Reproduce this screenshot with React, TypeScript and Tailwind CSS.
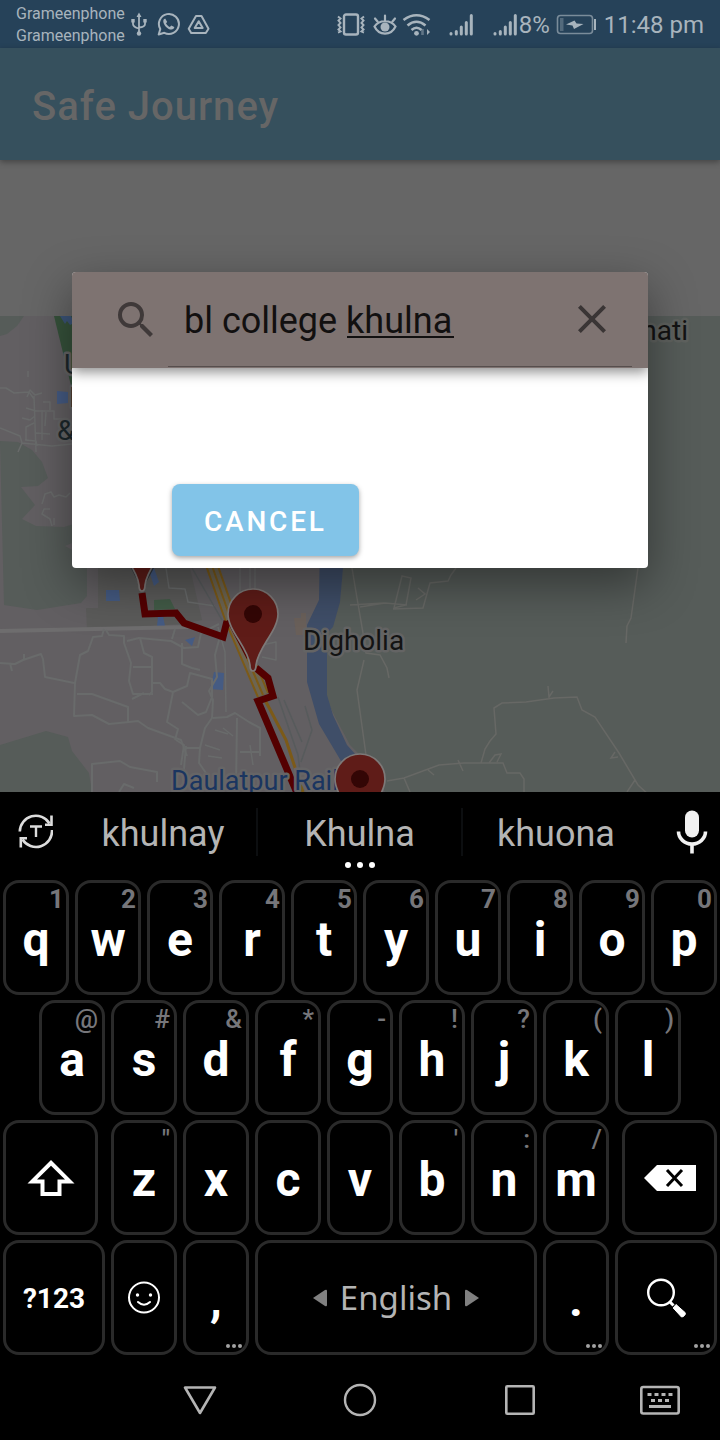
import React, { useState } from "react";

type KeyDef = { label: string; hint?: string };

const ROW_1: KeyDef[] = [
  { label: "q", hint: "1" },
  { label: "w", hint: "2" },
  { label: "e", hint: "3" },
  { label: "r", hint: "4" },
  { label: "t", hint: "5" },
  { label: "y", hint: "6" },
  { label: "u", hint: "7" },
  { label: "i", hint: "8" },
  { label: "o", hint: "9" },
  { label: "p", hint: "0" },
];

const ROW_2: KeyDef[] = [
  { label: "a", hint: "@" },
  { label: "s", hint: "#" },
  { label: "d", hint: "&" },
  { label: "f", hint: "*" },
  { label: "g", hint: "-" },
  { label: "h", hint: "!" },
  { label: "j", hint: "?" },
  { label: "k", hint: "(" },
  { label: "l", hint: ")" },
];

const ROW_3: KeyDef[] = [
  { label: "z", hint: '"' },
  { label: "x" },
  { label: "c" },
  { label: "v" },
  { label: "b", hint: "'" },
  { label: "n", hint: ":" },
  { label: "m", hint: "/" },
];

function SignalIcon() {
  return (
    <svg className="h-6 w-6" viewBox="0 0 24 24" stroke="currentColor" strokeWidth="3" strokeLinecap="round" aria-hidden="true">
      <path d="M2 20.500v.5M7.300 18.500v2.500M12.300 14v7M17.300 9.500V21M22.300 2.500V21" />
    </svg>
  );
}

function StatusBar() {
  return (
    <header className="flex h-12 items-center justify-between bg-[#264259] px-4 text-[#a8b4bd]">
      <div className="flex items-center">
        <div className="pt-[2px] text-base leading-[22px]">
          <div>Grameenphone</div>
          <div>Grameenphone</div>
        </div>
        <svg className="ml-1 h-6 w-5" viewBox="0 0 20 24" fill="none" stroke="currentColor" strokeWidth="1.800" aria-hidden="true">
          <path d="M10 3v18M4 9.500v2.500q0 3 6 4.500M16 9.500v2.500q0 3-6 3.500" />
          <path d="M10 .5 7.500 5h5zM2.300 7h3.400v3.400H2.300zM14.300 7h3.400v3.400h-3.400z" fill="currentColor" stroke="none" />
          <circle cx="10" cy="21.500" r="2.200" fill="currentColor" stroke="none" />
        </svg>
        <svg className="ml-2 h-6 w-6" viewBox="0 0 24 24" aria-hidden="true">
          <path d="M1.700 22.500 3.300 17A10 10 0 1 1 7.300 20.800z" fill="none" stroke="currentColor" strokeWidth="2" strokeLinejoin="round" />
          <path d="M8.200 6.500c-1.300.3-2 1.500-1.900 2.900.2 3.800 4.600 8.100 8.200 8.200 1.500 0 2.800-.9 2.800-2.500l-3.100-1.600-1.300 1.500c-1.600-.6-3.100-2.100-3.900-3.800l1.200-1.300z" fill="currentColor" />
        </svg>
        <svg className="ml-1.5 h-6 w-6" viewBox="0 0 24 24" fill="none" stroke="currentColor" strokeWidth="2" strokeLinejoin="round" aria-hidden="true">
          <path d="M9 4h5.500l7 12.700-2.700 4.300H4.200l-2.500-4.300z" />
          <path d="m11.700 9.200 4 6.700H7.700z" />
        </svg>
      </div>
      <div className="flex items-center pt-[2px] text-2xl leading-6">
        <svg className="h-6 w-7" viewBox="0 0 28 24" fill="none" stroke="currentColor" aria-hidden="true">
          <rect x="7" y="1.500" width="14" height="20" rx="2" strokeWidth="2.400" />
          <path d="M1 3.500l2.500 2-2 2 2 2.500-2 2 2 2.500-2 2 2 2-2.500 1M27 3.500l-2.500 2 2 2-2 2.500 2 2-2 2.500 2 2-2 2 2.500 1" strokeWidth="2" />
        </svg>
        <svg className="ml-2 h-6 w-6" viewBox="0 0 24 24" fill="none" stroke="currentColor" strokeWidth="2.200" strokeLinecap="round" aria-hidden="true">
          <path d="M1.500 13.500C6 6.500 18 6.500 22.500 13.500 18 23 6 23 1.500 13.500zM12 7.500V2.500M4.500 8.500 2 5.500M19.500 8.500 22 5.500" />
          <circle cx="12" cy="14" r="4.500" fill="currentColor" stroke="none" />
        </svg>
        <svg className="ml-1 h-6 w-8" viewBox="0 0 32 24" fill="none" stroke="currentColor" strokeWidth="2.600" aria-hidden="true">
          <path d="M2.500 7q13-9.500 26 0M6.500 12.500q9-7.500 18 0M10.500 17q5-4.500 10 0" />
          <circle cx="15.500" cy="20.300" r="2.400" fill="currentColor" stroke="none" />
          <path d="M26 16v6l3-3z" fill="currentColor" stroke="none" />
          <path d="M21.500 16V22" strokeOpacity=".45" />
        </svg>
        <span className="ml-4"><SignalIcon /></span>
        <span className="ml-5"><SignalIcon /></span>
        <span className="ml-[2px]">8%</span>
        <svg className="ml-1.5 h-6 w-10" viewBox="0 0 40 24" aria-hidden="true">
          <rect x="1.500" y="2.500" width="35" height="18" rx="3" fill="none" stroke="currentColor" strokeOpacity=".65" strokeWidth="1.600" />
          <path d="M4 5h3.500v13H4z" fill="currentColor" fillOpacity=".35" />
          <path d="M38 6h2.500v11H38z" fill="currentColor" />
          <path d="m18.500 7.500 2 3 7 .5-9.500 5-1.500-3.500L10 11.500z" fill="currentColor" />
        </svg>
        <span className="ml-2">11:48 pm</span>
      </div>
    </header>
  );
}

function Pin({ x, y }: { x: number; y: number }) {
  return (
    <g transform={`translate(${x} ${y})`}>
      <path
        d="M0 0c-2 0-3-2-3-6-2-18-22-34-22-51a25 25 0 0 1 50 0C25-40 5-24 3-6 3-2 2 0 0 0z"
        fill="#5f1c18"
        stroke="#7d7978"
        strokeWidth="1.700"
      />
      <circle cx="0" cy="-57" r="9" fill="#330605" />
    </g>
  );
}

function MapView() {
  return (
    <svg
      className="block h-[476px] w-full"
      viewBox="0 316 720 476"
      preserveAspectRatio="xMidYMid slice"
      role="img"
      aria-label="Map of Digholia and Daulatpur"
    >
      <rect x="0" y="316" width="720" height="476" fill="#625f62" />
      <g fill="#565c59">
        <path d="M340 316H720V792H385L365 760 350 745 334 715 327 700V625L340 600 343 568z" />
        <path d="M0 316h24l-7 10-10 8-7 2zM0 441l18 1 14 8 10 12 6 16-10 8-17 1 14 18-13 14 14 7 28 1 20-6v17l-19 8 22 12v38l-6 7-44 7-33-5z" />
        <path d="M0 745l46-14 22 6 4 14 17 22 3 19H0z" />
      </g>
      <path d="M98 568h92l12 52-20 4-95 6-1-22h12z" fill="#5b5b5a" />
      <path d="M54 316h60v90H76z" fill="#36523b" />
      <path d="M60 316h11l3 7-4 2-3-4-2 3zM73 316h6v4z" fill="#3b5478" />
      <path d="M154 600l16-1 5 10-21 1z" fill="#425b47" />
      <path d="M294 618h7v-5h5v22h-10z" fill="#6a605a" />
      <g fill="#455b83">
        <path d="M57 391l11 1v11l-11 1zM106 590h13l1 11h-14zM149 571l5-3 5 14-5 4zM158 616h5l2 10h-8zM185 640l10-3-3 9zM214 672l10 1-1 17-13-1z" />
      </g>
      <path d="M320 540h24l-1 28-3 34-7 25-6 6v62l6 20 14 30 20 22 8 25h-20l-14-31-22-37-12-42V625l12-25z" fill="#3f4e68" />

      <g fill="none" stroke="#696b6b" strokeWidth="2" strokeLinejoin="round">
        <path d="M0 631 190 627" stroke="#6e6d6e" strokeWidth="4" />
        <path d="M0 388h6l8 5 15-1 5 7M27 397l3-7 5 5 7-2M34 396l2 56M42 410v30M26 408l10 3h18v8h14M50 410v-8h-7M22 418l8 2 5-4M26 440v-13l8-4M25 440l11 1 1 5M36 433l14 1M46 412l-1 14M0 428l20 8 2 7 30 3 20-2M22 443l-4 9M28 371v6" strokeWidth="1.500" />
        <path d="M42 504l3-10 6-2 3 5 5-2 7 2 4-4M50 509h-6l-2 5 8 5 2 7M54 518v7" strokeWidth="1.500" />
        <path d="M0 663l15 1 8-4 18-6 2 5 2 18 29 6M10 663l2 8M24 659v-5M75 683l5-28 8-4 5-14 9-1 2-7M75 683l-1 33 18-1 17 9 20-2 9-1 10 7 33 12 6 16M77 694h15l36 13v15M106 630l3 5 15 1v7l7 20-2 18 4 13h20M127 641l12-3 32 3 13 7 14-1 3-14 18-9" />
        <path d="M140 638l4 15 8 4v35l-3 3M152 667h-19M144 693l-12 6M152 683h8l5 6 8 3 14-6 3-13 22 6v18l-6 15-8 3-16-13M173 692l-6 30 11 7-3 11M182 643v21l10 4 8 2M175 629l-3 10M92 792v-28l28-3 10 6 27 5v10M119 792l5-8 10 4M176 740l8 5-3 20M186 748h14l5-20 7-10 1-18-4-9 8-14-2-22 4-15M213 718l14-1 8-4 14 9 11 6v28M237 718l-1 70M200 748l-1 15 7 10M240 752h19M183 780l3-34" />
        <path d="M166 568l3 20 16 1 3 13 27 4M240 568v25M250 568v20M255 568v22M262 645l14-3v18l-14-3M218 627l7 25 1 60M215 730l13 4M205 745l15 5M208 756l14 2M223 728l10 8M250 745l3 20" strokeWidth="1.500" />
      </g>
      <g fill="none" stroke="#676865" strokeWidth="1.500">
        <path d="M352 568l5 30 6 35 3 20 14 2 7 13 2 10M350 605l34-2M364 660l-7 30 9 65M360 607l25-4 22 2M402 576l9 2-5 27-12 3zM456 568l-5 7-3 6-18 2-7 25-30 1M418 588l7 6-9 6" />
        <path d="M638 568l-7 50-4 8-1 17M387 781l17-3 35-13 25-2h39l4 10h13l4 6v13M404 778l6 14M481 763l4-14 5-8 6-7-2-26 8-5 24-1 28-4 23-1 5 13 13 7 24 36 19 32 12 11M548 686l1 11 4-6M627 792l8-12M489 763l6-8 6-1-4 8M428 770l6 5M458 760l5 11M615 752l-4 6 7-1" />
      </g>
      <path d="M192 568l30 52M278 697l20 58 3 25M284 700l18 42M305 706l7 24-11 32" fill="none" stroke="#575b5c" strokeWidth="1.500" />

      <g fill="none">
        <path d="M210 560l21 60 32 75" stroke="#7c5a18" strokeWidth="13" />
        <path d="M210 560l21 60 32 75" stroke="#6d6552" strokeWidth="9" />
        <path d="M210 560l21 60 32 75" stroke="#7c5a18" strokeWidth="2" />
        <path d="M264 698l22 42 17 52" stroke="#7c5a18" strokeWidth="3" />
      </g>

      <path d="M142 593l3 21 31-1 8 10 39 14 4-16" fill="none" stroke="#540000" strokeWidth="7" />
      <path d="M228 620l20 38" fill="none" stroke="#540000" strokeWidth="3" />
      <path d="M256 668l12 10 5 18-15 5 39 92" fill="none" stroke="#540000" strokeWidth="7" />
      <path d="M131 568l11 22 12-22z" fill="#2f353d" />
      <Pin x={142} y={591} />
      <Pin x={253} y={671} />

      <g fontFamily="Roboto, sans-serif" fontSize="28" strokeWidth="5" strokeLinejoin="round" paintOrder="stroke">
        <text x="64" y="374" fill="#1c272b" stroke="#656566">U</text>
        <text x="69" y="407" fill="#1c272b" stroke="#656566">I</text>
        <text x="57" y="440" fill="#1c272b" stroke="#656566">&amp;</text>
        <text x="688" y="340" fill="#131313" stroke="#5f625f" textAnchor="end">nati</text>
        <text x="303" y="650" fill="#131313" stroke="#646464">Digholia</text>
        <text x="171" y="790" fontSize="27" fill="#1a3560" stroke="#666566">Daulatpur Railw</text>
      </g>
      <Pin x={360} y={836} />
    </svg>
  );
}

function SearchDialog() {
  const [query, setQuery] = useState("bl college khulna");
  return (
    <section
      role="dialog"
      aria-label="Search place"
      className="absolute inset-x-[72px] top-28 overflow-hidden rounded-[4px] bg-white shadow-[0_16px_48px_rgba(0,0,0,0.42)]"
    >
      <div className="relative flex h-24 items-center bg-[#7e7371] pr-8 pl-10 shadow-[0_4px_12px_rgba(0,0,0,0.45)]">
        <svg className="h-12 w-12 shrink-0" viewBox="0 0 24 24" fill="#3f3939" aria-hidden="true">
          <path d="M15.500 14h-.79l-.28-.27A6.471 6.471 0 0 0 16 9.500 6.500 6.500 0 1 0 9.500 16c1.610 0 3.090-.59 4.230-1.570l.27.28v.79l5 4.990L20.490 19l-4.990-5zm-6 0C7.010 14 5 11.990 5 9.500S7.010 5 9.500 5 14 7.010 14 9.500 11.990 14 9.500 14z" />
        </svg>
        <label htmlFor="place" className="sr-only">Place</label>
        <input
          id="place"
          type="text"
          value={query}
          onChange={(e) => setQuery(e.target.value)}
          className="ml-6 h-12 min-w-0 flex-1 bg-transparent pt-[2px] text-4xl text-[#121010] outline-none"
        />
        <button type="button" aria-label="Clear" onClick={() => setQuery("")} className="pb-[2px]">
          <svg className="h-12 w-12" viewBox="0 0 24 24" fill="#3a3535" aria-hidden="true">
            <path d="M19 6.410 17.590 5 12 10.590 6.410 5 5 6.410 10.590 12 5 17.590 6.410 19 12 13.410 17.590 19 19 17.590 13.410 12z" />
          </svg>
        </button>
        {query.endsWith("khulna") && <span className="absolute top-16 left-[275px] h-[2px] w-[107px] bg-[#121010]" />}
        <span className="absolute right-4 bottom-px left-24 h-px bg-[#564e4d]" />
      </div>
      <div className="px-[100px] pt-[116px] pb-3">
        <button
          type="button"
          className="h-[72px] rounded-lg bg-[#82c4e8] px-8 pt-1 text-[28px] font-medium tracking-widest text-white shadow-[0_2px_5px_rgba(0,0,0,0.35)]"
        >
          CANCEL
        </button>
      </div>
    </section>
  );
}

function Key({
  children,
  hint,
  more,
  label,
  className = "",
}: {
  children: React.ReactNode;
  hint?: string;
  more?: boolean;
  label?: string;
  className?: string;
}) {
  const digit = hint !== undefined && /\d/.test(hint);
  return (
    <button
      type="button"
      aria-label={label}
      className={`relative mx-[3px] flex h-[115px] items-center justify-center rounded-2xl border-3 border-[#2a2a2a] text-5xl font-bold text-white ${className}`}
    >
      {children}
      {hint && (
        <span
          className={`absolute top-[3px] text-[26px] leading-[26px] text-[#76767a] ${digit ? "right-[2px]" : "right-1 font-medium"}`}
        >
          {hint}
        </span>
      )}
      {more && (
        <span className="absolute right-1 bottom-1 flex gap-[2px]">
          <i className="size-1 rounded-full bg-[#a2a2a2]" />
          <i className="size-1 rounded-full bg-[#a2a2a2]" />
          <i className="size-1 rounded-full bg-[#a2a2a2]" />
        </span>
      )}
    </button>
  );
}

function LetterKeys({ keys }: { keys: KeyDef[] }) {
  return (
    <>
      {keys.map((k) => (
        <Key key={k.label} hint={k.hint} className="col-span-2">
          <span className="pt-1">{k.label}</span>
        </Key>
      ))}
    </>
  );
}

function Suggestions() {
  return (
    <div className="flex h-[88px] text-4xl text-[#b4b4b4]">
      <button type="button" aria-label="Switch text mode" className="flex w-[70px] shrink-0 items-center justify-center pb-2">
        <svg className="h-9 w-9" viewBox="0 0 36 36" fill="none" stroke="#dcdcdc" strokeWidth="2.600" aria-hidden="true">
          <path d="M2.800 17.500A16 16 0 0 1 32.500 9.500M35 16A16 16 0 0 1 5.500 25.500" />
          <path d="M34.500 1.500v9.300H28M3.800 33.500v-9.300H10" />
          <path d="M13 12.500h12M19 12.500v10.500" strokeWidth="2.400" />
        </svg>
      </button>
      <div className="relative grid flex-1 grid-cols-[186fr_207fr_186fr] items-center pb-2">
        <button type="button" className="h-12 pt-1">khulnay</button>
        <button type="button" className="h-12 border-x-2 border-[#0c0e10] pt-1">Khulna</button>
        <button type="button" className="h-12 pt-1">khuona</button>
        <span className="absolute inset-x-0 bottom-3 flex justify-center gap-1.5">
          <i className="size-1.5 rounded-full bg-white" />
          <i className="size-1.5 rounded-full bg-white" />
          <i className="size-1.5 rounded-full bg-white" />
        </span>
      </div>
      <button type="button" aria-label="Voice input" className="flex w-[71px] shrink-0 items-center justify-end pr-3 pb-2">
        <svg className="h-11 w-8" viewBox="0 0 32 44" aria-hidden="true">
          <rect x="9" y=".5" width="14" height="27" rx="7" fill="#f1f1f1" />
          <path d="M2.500 21.500a13.500 12.500 0 0 0 27 0M16 34v9.500" fill="none" stroke="#f1f1f1" strokeWidth="3.600" />
        </svg>
      </button>
    </div>
  );
}

function Keyboard() {
  return (
    <section aria-label="Keyboard" className="bg-black">
      <Suggestions />
      <div className="flex flex-col gap-[5px] pb-[5px]">
        <div className="grid grid-cols-20">
          <LetterKeys keys={ROW_1} />
        </div>
        <div className="grid grid-cols-20">
          <span />
          <LetterKeys keys={ROW_2} />
        </div>
        <div className="grid grid-cols-20">
          <Key label="Shift" className="col-span-3 mr-[10px]">
            <svg className="h-9 w-12" viewBox="0 0 48 36" aria-hidden="true">
              <path fillRule="evenodd" fill="#fff" d="M24 0 47.500 23.500H34.500V36H13.500V23.500H.5zM24 5.700 10 19.500H17.500V32H30.500V19.500H38z" />
            </svg>
          </Key>
          <LetterKeys keys={ROW_3} />
          <Key label="Backspace" className="col-span-3 ml-[10px]">
            <svg className="h-[26px] w-[52px]" viewBox="0 0 52 26" aria-hidden="true">
              <path d="M0 13 13 0h39v26H13z" fill="#fff" />
              <path d="m23 5 15 16M38 5 23 21" stroke="#000" strokeWidth="3" />
            </svg>
          </Key>
        </div>
        <div className="grid grid-cols-20">
          <Key className="col-span-3">
            <span className="pt-[2px] text-[28px]">?123</span>
          </Key>
          <Key label="Emoji" className="col-span-2">
            <svg className="h-9 w-9" viewBox="0 0 36 36" fill="none" stroke="#fff" strokeWidth="2" aria-hidden="true">
              <circle cx="18" cy="17.500" r="15" />
              <path d="M12 22q6 5.500 12 0" strokeLinecap="round" />
              <circle cx="11.500" cy="15" r="1.700" fill="#fff" stroke="none" />
              <circle cx="24.500" cy="15" r="1.700" fill="#fff" stroke="none" />
            </svg>
          </Key>
          <Key label="Comma" className="col-span-2" more>
            <span className="pt-1">,</span>
          </Key>
          <Key className="col-span-8">
            <span className="flex items-center gap-3 font-['Noto_Sans',sans-serif] text-[33px] font-normal text-[#b4b4b4]">
              <svg className="h-[18px] w-4" viewBox="0 0 16 18" fill="#808080" aria-hidden="true">
                <path d="M1 9 13 1q2-1 2 1v14q0 2-2 1z" />
              </svg>
              English
              <svg className="h-[18px] w-4" viewBox="0 0 16 18" fill="#808080" aria-hidden="true">
                <path d="M15 9 3 1Q1 0 1 2v14q0 2 2 1z" />
              </svg>
            </span>
          </Key>
          <Key label="Period" className="col-span-2" more>
            <span className="pt-1">.</span>
          </Key>
          <Key label="Search" className="col-span-3" more>
            <svg className="h-10 w-10" viewBox="0 0 40 40" fill="none" stroke="#fff" aria-hidden="true">
              <circle cx="15" cy="14.500" r="12.800" strokeWidth="2.400" />
              <path d="m23.500 23.500 4 4" strokeWidth="3" />
              <path d="m27.200 30 2.800-3.500 9 8q1 1.500-.5 3t-3 1.500z" fill="#fff" stroke="#fff" strokeLinejoin="round" />
            </svg>
          </Key>
        </div>
      </div>
    </section>
  );
}

function NavBar() {
  return (
    <nav aria-label="System" className="grid h-20 flex-1 grid-cols-9 items-center justify-items-center bg-black text-[#b4b4b4]">
      <button type="button" aria-label="Back" className="col-start-3">
        <svg className="h-9 w-9" viewBox="0 0 36 36" fill="none" stroke="currentColor" strokeWidth="2.600" strokeLinejoin="round">
          <path d="M3 5.500h30L18 31z" />
        </svg>
      </button>
      <button type="button" aria-label="Home" className="col-start-5">
        <svg className="h-9 w-9" viewBox="0 0 36 36" fill="none" stroke="currentColor" strokeWidth="2.400">
          <circle cx="18" cy="18" r="15" />
        </svg>
      </button>
      <button type="button" aria-label="Recent apps" className="col-start-7">
        <svg className="h-9 w-9" viewBox="0 0 36 36" fill="none" stroke="currentColor" strokeWidth="2.600">
          <rect x="4.300" y="4.300" width="27.400" height="27.400" rx="1" />
        </svg>
      </button>
      <button type="button" aria-label="Keyboard picker" className="col-start-9 justify-self-start">
        <svg className="h-9 w-10" viewBox="0 0 40 36" fill="none" stroke="currentColor" strokeWidth="2.600">
          <rect x="1.300" y="5" width="37.400" height="26.500" rx="2" />
          <path d="M7.500 12.500h4M14.500 12.500h4M21.500 12.500h4M28.500 12.500h4M11 18.500h4M18 18.500h4M25 18.500h4M9 24.500h22" strokeWidth="2.800" />
        </svg>
      </button>
    </nav>
  );
}

export default function App() {
  return (
    <div className="flex min-h-screen flex-col bg-black font-[Roboto,sans-serif]">
      <StatusBar />
      <div className="relative z-10 flex h-28 items-center bg-[#36505d] px-8 pt-1.5 shadow-[0_2px_6px_rgba(0,0,0,0.35)]">
        <h1 className="text-[40px] font-medium tracking-wide text-[#666666]">Safe Journey</h1>
      </div>
      <main className="relative bg-[#666666] pt-[156px]">
        <MapView />
        <SearchDialog />
      </main>
      <Keyboard />
      <NavBar />
    </div>
  );
}
